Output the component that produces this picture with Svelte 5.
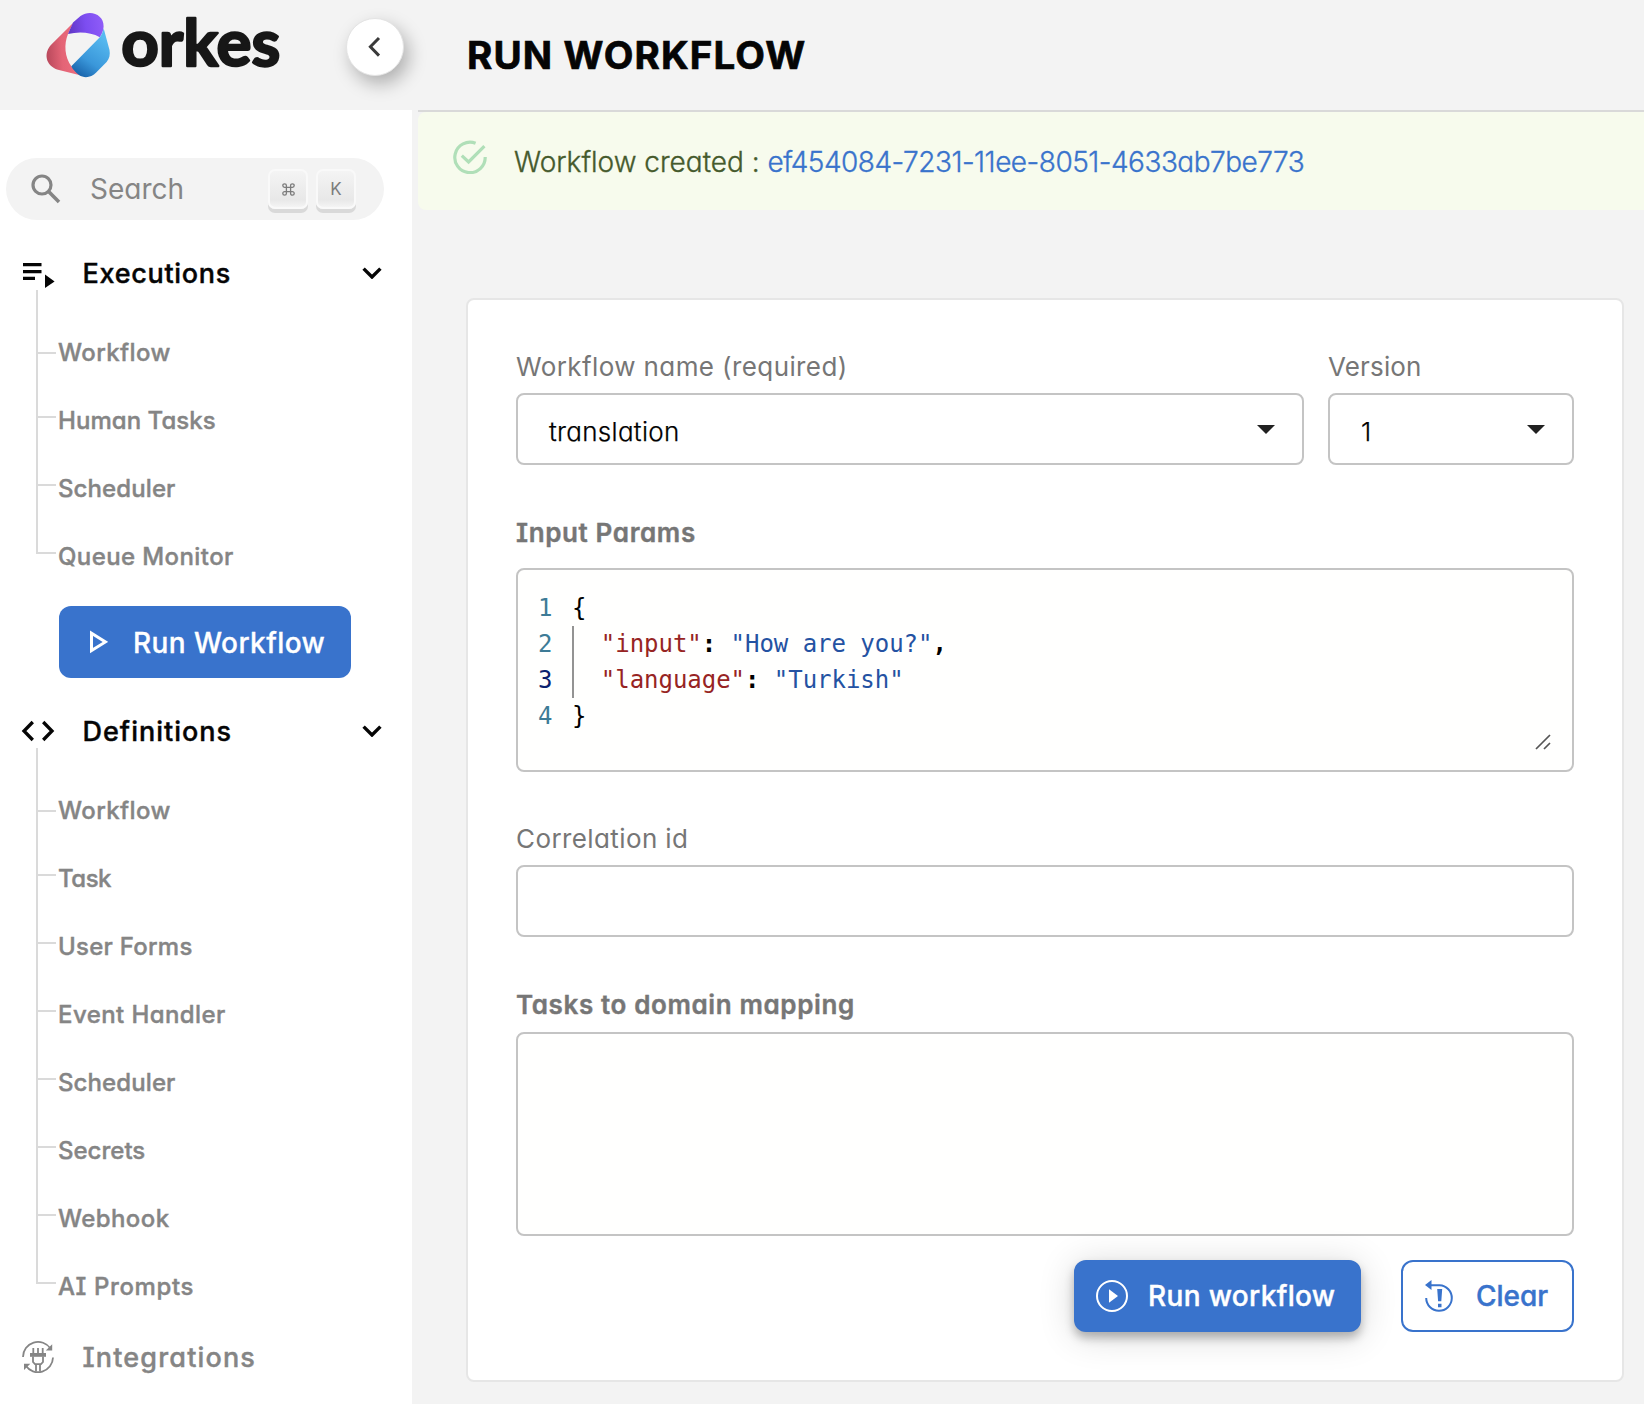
<script>
  const executions = [
    { label: 'Workflow', track: 0.4 },
    { label: 'Human Tasks', track: 0.05 },
    { label: 'Scheduler', track: 0.1 },
    { label: 'Queue Monitor', track: 0.4 }
  ];
  const definitions = [
    { label: 'Workflow', track: 0.4 },
    { label: 'Task', track: -0.5 },
    { label: 'User Forms', track: 0.25 },
    { label: 'Event Handler', track: 0.42 },
    { label: 'Scheduler', track: 0.1 },
    { label: 'Secrets', track: 0 },
    { label: 'Webhook', track: 0.4 },
    { label: 'AI Prompts', track: 0.6 }
  ];
</script>

{#snippet tree(items)}
  <ul class="tree">
    {#each items as item}
      <li style:letter-spacing="{item.track}px">{item.label}</li>
    {/each}
  </ul>
{/snippet}

{#snippet chevron()}
  <svg class="chevron" width="20" height="12" viewBox="0 0 20 12">
    <path d="M1.6 1.6 10 10 18.4 1.6" fill="none" stroke="#050505" stroke-width="3.4" />
  </svg>
{/snippet}

{#snippet caret()}
  <svg width="18" height="9" viewBox="0 0 18 9"><path d="M0 0h18L9 9z" fill="#212121" /></svg>
{/snippet}

<div class="app">
  <header>
    <div class="brand">
      <svg class="logo" width="240" height="80" viewBox="0 0 240 80">
        <defs>
          <linearGradient id="red" x1="0" y1="0.6" x2="1" y2="0.5">
            <stop offset="0" stop-color="#b9495c" />
            <stop offset="0.45" stop-color="#e46476" />
            <stop offset="1" stop-color="#ee6f80" />
          </linearGradient>
          <linearGradient id="violet" x1="0" y1="0.6" x2="1" y2="0.5">
            <stop offset="0" stop-color="#5f36c4" />
            <stop offset="0.5" stop-color="#7c4df0" />
            <stop offset="1" stop-color="#8f5cf8" />
          </linearGradient>
          <linearGradient id="blue" x1="0.2" y1="1" x2="0.7" y2="0.1">
            <stop offset="0" stop-color="#1660a8" />
            <stop offset="0.4" stop-color="#3a97da" />
            <stop offset="1" stop-color="#57baf0" />
          </linearGradient>
        </defs>
        <path d="M32 23 10.4 44.4C2.5 52.5 4 65.5 17 69.7L40 75.4 30.5 66.4C23.5 57 22.8 44 27 34z" fill="url(#red)" />
        <path d="M27 34 32 22.5 39.5 16C49.5 9.2 63 14.8 62.6 26.5 62.4 30.5 61 34 58.8 37.2 50 32.2 38 31.3 27 34z" fill="url(#violet)" />
        <path d="M62.7 28.5 68.5 50C69.3 54.5 68.5 58.5 65.6 62L55.2 72.6C50.5 77.7 43 78.5 38 75 34.5 72.3 32 69.5 30.3 66.2L58.8 37.2C60.8 34.5 61.9 31.7 62.7 28.5z" fill="url(#blue)" />
        <text x="80.2" y="65.6">orkes</text>
      </svg>
      <button class="collapse" aria-label="Collapse sidebar">
        <svg width="14" height="22" viewBox="0 0 14 22">
          <path d="M12 2 3.4 10.8 12 19.6" fill="none" stroke="#3a3a3a" stroke-width="3" />
        </svg>
      </button>
    </div>
    <h1>RUN WORKFLOW</h1>
  </header>

  <div class="body">
    <nav>
      <div class="search">
        <svg width="30" height="30" viewBox="0 0 30 30" fill="none" stroke="#858585" stroke-width="3.2">
          <circle cx="11" cy="11" r="9" />
          <path d="M17.6 17.6 28 28" stroke-width="3.6" />
        </svg>
        <span class="placeholder">Search</span>
        <kbd>
          <svg width="13" height="13" viewBox="0 0 13 13" fill="none" stroke="#7c7c7c" stroke-width="1.3">
            <path d="M4.4 4.4V2.6A1.8 1.8 0 1 0 2.6 4.4H10.4A1.8 1.8 0 1 0 8.6 2.6V10.4A1.8 1.8 0 1 0 10.4 8.6H2.6A1.8 1.8 0 1 0 4.4 10.4z" />
          </svg>
        </kbd>
        <kbd>K</kbd>
      </div>

      <div class="group">
        <svg class="lead" width="34" height="34" viewBox="0 0 34 34" fill="#050505">
          <path d="M2 7h18.5v3.3H2zM2 14h18.5v3.3H2zM2 20.7h12V24H2zM24 18.6 33.6 25.6 24 32z" />
        </svg>
        <span class="t-exec">Executions</span>
        {@render chevron()}
      </div>
      {@render tree(executions)}

      <button class="run-side">
        <svg width="19" height="24" viewBox="0 0 19 24">
          <path d="M2.5 3.2v17.4L16.5 11.9z" fill="none" stroke="#fff" stroke-width="3" />
        </svg>
        <span>Run Workflow</span>
      </button>

      <div class="group">
        <svg class="lead" width="34" height="34" viewBox="0 0 34 34" fill="none" stroke="#050505" stroke-width="3.3">
          <path d="M11.8 8 3 17l8.8 9M22.2 8 31 17l-8.8 9" />
        </svg>
        <span class="t-def">Definitions</span>
        {@render chevron()}
      </div>
      {@render tree(definitions)}

      <div class="group muted">
        <svg class="lead" width="34" height="34" viewBox="0 0 34 34" fill="none" stroke="#858585" stroke-width="1.8">
          <path d="M2 17A15 15 0 0 1 29.5 8.6M32 17.5A15 15 0 0 1 4.6 25.6" />
          <path d="M31.2 4.2v6.2h-6.4zM3 30v-6.3h6.3z" fill="#858585" stroke="none" />
          <path d="M12.3 8v5M17 8v5M21.7 8v5" />
          <path d="M9 13h16v3.8H9z" fill="#858585" stroke="none" />
          <path d="M12 16.5v5.5l2 2.2h6l2-2.2v-5.5M15 24.5v7M19 24.5v7" />
        </svg>
        <span class="t-int">Integrations</span>
      </div>
    </nav>

    <main>
      <div class="alert">
        <svg width="34" height="34" viewBox="0 0 34 34" fill="none" stroke="#b0dfb8" stroke-width="3.2">
          <path d="M22.6 3.3A15.2 15.2 0 1 0 32.2 17" />
          <path d="M8.8 15.6 15.6 22 31.4 6.2" />
        </svg>
        <p><span>Workflow created :</span> <a href="#execution">ef454084-7231-11ee-8051-4633ab7be773</a></p>
      </div>

      <section class="card">
        <div class="row">
          <div class="name">
            <div class="label">Workflow name (required)</div>
            <div class="select"><span>translation</span>{@render caret()}</div>
          </div>
          <div class="version">
            <div class="label tight">Version</div>
            <div class="select"><span>1</span>{@render caret()}</div>
          </div>
        </div>

        <div class="label strong params">Input Params</div>
        <div class="editor">
          <ol>
            <li>1</li>
            <li>2</li>
            <li class="active">3</li>
            <li>4</li>
          </ol>
          <div class="code">
            <pre>{'{'}</pre>
            <div class="guide">
              <pre>  <i>"input"</i><b>:</b> <u>"How are you?"</u><b>,</b></pre>
              <pre>  <i>"language"</i><b>:</b> <u>"Turkish"</u></pre>
            </div>
            <pre>{'}'}</pre>
          </div>
          <svg class="grip" width="16" height="16" viewBox="0 0 16 16" fill="none" stroke="#555" stroke-width="1.7">
            <path d="M1 15 15 1M9 15 15 9" />
          </svg>
        </div>

        <div class="label correlation">Correlation id</div>
        <div class="field"></div>

        <div class="label strong domain">Tasks to domain mapping</div>
        <div class="field tall"></div>

        <div class="actions">
          <button class="primary">
            <svg width="32" height="32" viewBox="0 0 32 32">
              <circle cx="16" cy="16" r="15" fill="none" stroke="#fff" stroke-width="2" />
              <path d="M13 9.2 22 16l-9 6.8z" fill="#fff" />
            </svg>
            Run workflow
          </button>
          <button class="outline">
            <svg width="29" height="32" viewBox="0 0 29 32" fill="none" stroke="#3973cc" stroke-width="2">
              <path d="M5 5.2H14.5A12.8 12.8 0 1 1 1.2 18" />
              <path d="M0 5 6.5 0v10z" fill="#3973cc" stroke="none" />
              <path d="M12.2 9h5l-.9 12.2h-3.2zM13 23.8h3.5v3.4H13z" fill="#3973cc" stroke="none" />
            </svg>
            Clear
          </button>
        </div>
      </section>
    </main>
  </div>
</div>

<style>
  :global(body) {
    background: #f3f3f3;
  }
  .app {
    width: 1644px;
    height: 1404px;
    overflow: hidden;
    display: flex;
    flex-direction: column;
    background: #f3f3f3;
    font-family: Inter, 'Liberation Sans', sans-serif;
    font-feature-settings: 'cv11', 'cv08';
    color: #050505;
  }
  button {
    font: inherit;
    font-feature-settings: inherit;
    border: 0;
    margin: 0;
    padding: 0;
    display: flex;
    align-items: center;
    box-sizing: border-box;
  }
  header {
    height: 110px;
    flex: none;
    display: flex;
  }
  .brand {
    width: 412px;
    flex: none;
    display: flex;
    align-items: flex-start;
  }
  .logo {
    margin-left: 41px;
    overflow: visible;
  }
  .logo text {
    font: 700 65.5px Lato, sans-serif;
    fill: #171717;
    stroke: #171717;
    stroke-width: 2.4px;
    stroke-linejoin: round;
  }
  .collapse {
    width: 58px;
    height: 58px;
    margin: 18px 0 0 65px;
    border: 1px solid #e4e4e4;
    border-radius: 50%;
    background: #fff;
    padding-left: 20px;
    box-shadow: 5px 8px 18px rgba(0, 0, 0, 0.28);
  }
  h1 {
    margin: 35px 0 0 55px;
    font-size: 38.5px;
    line-height: 40px;
    font-weight: 700;
    letter-spacing: 1.15px;
    -webkit-text-stroke: 0.7px currentColor;
  }
  .body {
    flex: 1;
    display: flex;
    gap: 6px;
  }
  nav {
    width: 412px;
    flex: none;
    box-sizing: border-box;
    padding-top: 48px;
    background: #fff;
  }
  .search {
    box-sizing: border-box;
    width: 378px;
    height: 62px;
    margin: 0 0 29px 6px;
    padding: 0 28px 0 25px;
    border-radius: 31px;
    background: #f3f3f3;
    display: flex;
    align-items: center;
    gap: 8px;
  }
  .placeholder {
    flex: 1;
    margin-left: 21px;
    font-size: 28px;
    color: #858585;
  }
  kbd {
    width: 40px;
    height: 40px;
    box-sizing: border-box;
    border: 2px solid #f9f9f9;
    border-radius: 7px;
    background: linear-gradient(#f4f4f4, #e8e8e8 80%, #f4f4f4);
    box-shadow: 0 4px 0 #d9d9d9;
    display: flex;
    align-items: center;
    justify-content: center;
    font: 400 17px Inter, sans-serif;
    color: #7c7c7c;
  }
  .group {
    height: 48px;
    display: flex;
    align-items: center;
    padding: 0 30px 0 21px;
    font-size: 27px;
    font-weight: 500;
    -webkit-text-stroke: 0.4px currentColor;
  }
  .group span {
    flex: 1;
    margin-left: 27.5px;
  }
  .t-exec {
    letter-spacing: 0.7px;
  }
  .t-def {
    letter-spacing: 1px;
  }
  .t-int {
    letter-spacing: 1.15px;
  }
  .muted {
    margin-top: 13px;
    color: #858585;
  }
  .tree {
    list-style: none;
    margin: -7px 0 0;
    padding: 28px 0 0;
    background: linear-gradient(#dadada, #dadada) 36px 0 / 2px 28px no-repeat;
  }
  .tree li {
    box-sizing: border-box;
    height: 68px;
    line-height: 68px;
    padding: 1px 0 0 58px;
    font-size: 24px;
    font-weight: 500;
    color: #858585;
    -webkit-text-stroke: 0.4px currentColor;
    background:
      linear-gradient(#dadada, #dadada) 36px 0 / 2px 100% no-repeat,
      linear-gradient(#dadada, #dadada) 36px 30px / 20px 2px no-repeat;
  }
  .tree li:first-child {
    background-position:
      36px 0,
      36px 34px;
  }
  .tree li:last-child {
    background-size:
      2px 30px,
      20px 2px;
  }
  .run-side {
    width: 292px;
    height: 72px;
    margin: 16px 0 29px 59px;
    padding-left: 30px;
    gap: 25px;
    border-radius: 12px;
    background: #3973cc;
    color: #fff;
    font-size: 28px;
    font-weight: 500;
    letter-spacing: 0.42px;
    -webkit-text-stroke: 0.3px currentColor;
  }
  .run-side span {
    padding-top: 2px;
  }
  main {
    flex: 1;
    border-top: 2px solid #d9d9d9;
  }
  .alert {
    height: 98px;
    box-sizing: border-box;
    padding: 0 0 0 35px;
    border-radius: 8px 0 0 8px;
    background: #f7fbed;
    display: flex;
    align-items: center;
    gap: 27px;
  }
  .alert svg {
    margin-bottom: 8px;
  }
  .alert p {
    margin: 1px 0 0;
    font-size: 28px;
    font-weight: 300;
    color: #455a2c;
    white-space: nowrap;
    -webkit-text-stroke: 0.35px currentColor;
  }
  .alert a {
    color: #3973cc;
    text-decoration: none;
    letter-spacing: -0.5px;
  }
  .card {
    box-sizing: border-box;
    width: 1158px;
    margin: 88px 0 0 48px;
    padding: 51px 48px 48px;
    border: 2px solid #e6e6e6;
    border-radius: 8px;
    background: #fff;
  }
  .row {
    display: flex;
    gap: 24px;
  }
  .name {
    width: 788px;
  }
  .version {
    flex: 1;
  }
  .label {
    font-size: 26px;
    line-height: 32px;
    letter-spacing: 0.4px;
    color: #767676;
    margin-bottom: 10px;
  }
  .tight {
    letter-spacing: 0.15px;
  }
  .strong {
    font-weight: 600;
    letter-spacing: 0.62px;
    -webkit-text-stroke: 0.4px currentColor;
  }
  .select {
    box-sizing: border-box;
    height: 72px;
    padding: 0 27px 0 31px;
    border: 2px solid #c4c4c4;
    border-radius: 8px;
    display: flex;
    align-items: center;
    justify-content: space-between;
    font-size: 26px;
    font-weight: 300;
    letter-spacing: 0.3px;
    color: #000;
    -webkit-text-stroke: 0.25px currentColor;
  }
  .select span {
    padding-top: 5px;
  }
  .params {
    margin: 52px 0 19px;
  }
  .editor {
    position: relative;
    box-sizing: border-box;
    height: 204px;
    padding: 20px 0 0 20px;
    border: 2px solid #c4c4c4;
    border-radius: 8px;
    background: #fffffe;
    display: flex;
    gap: 19.5px;
    font: 24px/36px 'DejaVu Sans Mono', monospace;
  }
  .editor ol {
    list-style: none;
    margin: 0;
    padding: 0;
    color: #3d7b96;
  }
  .editor .active {
    color: #0b216f;
  }
  .editor pre {
    margin: 0;
    font: inherit;
    letter-spacing: -0.03px;
    color: #000;
  }
  .guide {
    background: linear-gradient(#939393, #939393) 0 0 / 2px 100% no-repeat;
  }
  .editor i {
    font-style: normal;
    color: #972423;
  }
  .editor u {
    text-decoration: none;
    color: #2452a2;
  }
  .grip {
    position: absolute;
    right: 21px;
    bottom: 20px;
  }
  .correlation {
    margin-top: 51px;
  }
  .field {
    box-sizing: border-box;
    height: 72px;
    border: 2px solid #c4c4c4;
    border-radius: 8px;
    background: #fff;
  }
  .domain {
    margin: 52px 0 11px;
  }
  .tall {
    height: 204px;
    background: #fffffe;
  }
  .actions {
    display: flex;
    justify-content: flex-end;
    gap: 40px;
    margin-top: 24px;
    font-size: 28px;
    font-weight: 500;
    -webkit-text-stroke: 0.4px currentColor;
  }
  .primary {
    width: 287px;
    height: 72px;
    padding-left: 22px;
    gap: 20px;
    border-radius: 12px;
    background: #3973cc;
    color: #fff;
    letter-spacing: 0.35px;
    box-shadow:
      0 6px 10px rgba(0, 0, 0, 0.26),
      0 4px 36px rgba(0, 0, 0, 0.16);
  }
  .outline {
    width: 173px;
    height: 72px;
    padding-left: 22px;
    gap: 22px;
    border: 2px solid #3973cc;
    border-radius: 12px;
    background: #fff;
    color: #3973cc;
    letter-spacing: 0;
  }
</style>
